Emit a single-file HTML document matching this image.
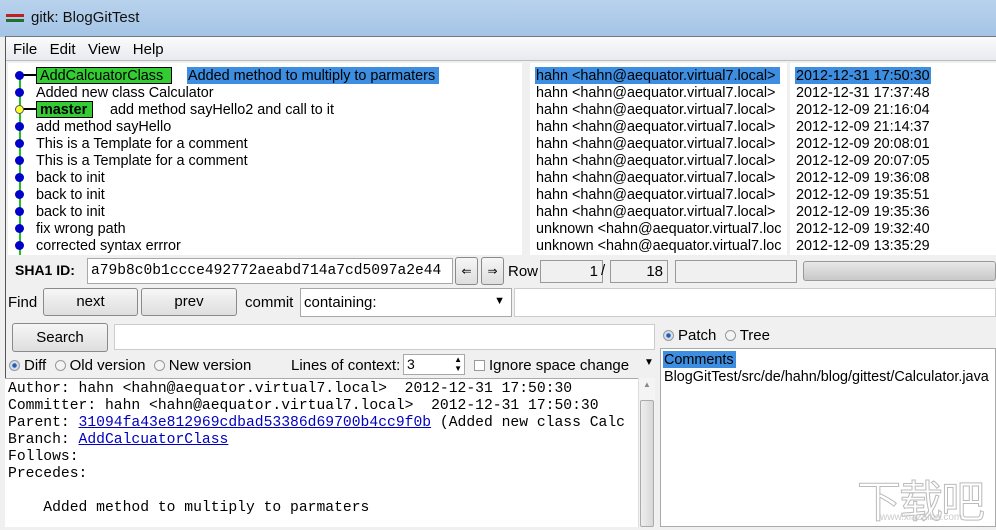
<!DOCTYPE html><html><head><style>
*{margin:0;padding:0;box-sizing:border-box}
body{width:996px;height:527px;overflow:hidden;position:relative;background:#f0f0f0;font-family:"Liberation Sans",sans-serif;font-size:14.4px;color:#000}
.a{position:absolute;white-space:nowrap}
.box{position:absolute;background:#fff;border:1px solid #a8a8a8}
.btn{position:absolute;border:1px solid #8a8a8a;border-radius:3px;background:linear-gradient(#f6f6f6,#dedede);text-align:center;font-size:15px}
.mono{font-family:"Liberation Mono",monospace;font-size:14.7px}
.dot{position:absolute;left:15px;width:9px;height:9px;border-radius:50%;background:#0000c8}
.rad{display:inline-block;width:11px;height:11px;border-radius:50%;border:1px solid #999;background:#f4f4f4;vertical-align:-1px;margin-right:4px}
.rad.on{background:radial-gradient(#2a5da8 30%,#cfe0f0 40%)}
</style></head><body>
<div class="a" style="left:0;top:0;width:996px;height:37px;background:linear-gradient(#b8d2ec,#a4c4e6)"></div>
<div class="a" style="left:6px;top:14px;width:18px;height:3px;background:#c02020"></div>
<div class="a" style="left:6px;top:19px;width:18px;height:3px;background:#207030"></div>
<div class="a" style="left:31px;top:9px;font-size:15px;color:#111">gitk: BlogGitTest</div>
<div class="a" style="left:5px;top:36px;width:991px;height:491px;background:#f0f0f0;border-left:1px solid #555;border-top:1px solid #777"></div>
<div class="a" style="left:6px;top:37px;width:990px;height:24px;background:linear-gradient(#fbfbfb,#e8eaf0);border-bottom:1px solid #bbb"></div>
<div class="a" style="left:13px;top:41px;font-size:15px">File&nbsp;&nbsp;&nbsp;Edit&nbsp;&nbsp;&nbsp;View&nbsp;&nbsp;&nbsp;Help</div>
<div class="a" style="left:8px;top:63px;width:514px;height:192px;background:#fff"></div>
<div class="a" style="left:530px;top:63px;width:257px;height:192px;background:#fff"></div>
<div class="a" style="left:790px;top:63px;width:206px;height:192px;background:#fff"></div>
<div class="a" style="left:19px;top:75px;width:2px;height:180px;background:#22c022"></div>
<div class="a" style="left:20px;top:74px;width:16px;height:2px;background:#000"></div>
<div class="a" style="left:20px;top:108px;width:16px;height:2px;background:#000"></div>
<div class="dot" style="top:71px"></div><div class="dot" style="top:88px"></div>
<div class="dot" style="top:105px;background:#ffff30;border:1px solid #555"></div>
<div class="dot" style="top:122px"></div><div class="dot" style="top:139px"></div><div class="dot" style="top:156px"></div><div class="dot" style="top:173px"></div><div class="dot" style="top:190px"></div><div class="dot" style="top:207px"></div><div class="dot" style="top:224px"></div><div class="dot" style="top:241px"></div>
<div class="a" style="left:36px;top:67px;width:136px;height:17px;background:#33cc33;border:1px solid #000"></div>
<div class="a" style="left:36px;top:101px;width:57px;height:17px;background:#33cc33;border:1px solid #000"></div>
<div class="a" style="left:187px;top:67px;width:252px;height:17px;background:#3d8ee0"></div>
<div class="a" style="left:36px;top:68px;line-height:17px">
&nbsp;AddCalcuatorClass<br>Added new class Calculator<br><b>&nbsp;master</b><br>add method sayHello<br>This is a Template for a comment<br>This is a Template for a comment<br>back to init<br>back to init<br>back to init<br>fix wrong path<br>corrected syntax errror</div>
<div class="a" style="left:188px;top:68px;line-height:17px">Added method to multiply to parmaters</div>
<div class="a" style="left:110px;top:102px;line-height:17px">add method sayHello2 and call to it</div>
<div class="a" style="left:535px;top:67px;width:245px;height:17px;background:#3d8ee0"></div>
<div class="a" style="left:795px;top:67px;width:136px;height:17px;background:#3d8ee0"></div>
<div class="a" style="left:536px;top:68px;line-height:17px">hahn &lt;hahn@aequator.virtual7.local&gt;<br>hahn &lt;hahn@aequator.virtual7.local&gt;<br>hahn &lt;hahn@aequator.virtual7.local&gt;<br>hahn &lt;hahn@aequator.virtual7.local&gt;<br>hahn &lt;hahn@aequator.virtual7.local&gt;<br>hahn &lt;hahn@aequator.virtual7.local&gt;<br>hahn &lt;hahn@aequator.virtual7.local&gt;<br>hahn &lt;hahn@aequator.virtual7.local&gt;<br>hahn &lt;hahn@aequator.virtual7.local&gt;<br>unknown &lt;hahn@aequator.virtual7.loc<br>unknown &lt;hahn@aequator.virtual7.loc</div>
<div class="a" style="left:796px;top:68px;line-height:17px">2012-12-31 17:50:30<br>2012-12-31 17:37:48<br>2012-12-09 21:16:04<br>2012-12-09 21:14:37<br>2012-12-09 20:08:01<br>2012-12-09 20:07:05<br>2012-12-09 19:36:08<br>2012-12-09 19:35:51<br>2012-12-09 19:35:36<br>2012-12-09 19:32:40<br>2012-12-09 13:35:29</div>
<div class="a" style="left:15px;top:262px;font-weight:bold;font-size:14px">SHA1 ID:</div>
<div class="box mono" style="left:87px;top:258px;width:366px;height:26px;padding:4px 3px;font-size:14.6px;overflow:hidden">a79b8c0b1ccce492772aeabd714a7cd5097a2e44</div>
<div class="btn" style="left:455px;top:257px;width:23px;height:28px;font-size:12px;line-height:26px">⇐</div>
<div class="btn" style="left:481px;top:257px;width:23px;height:28px;font-size:12px;line-height:26px">⇒</div>
<div class="a" style="left:508px;top:263px;font-size:15px">Row</div>
<div class="a" style="left:540px;top:260px;width:63px;height:23px;border:1px solid #999;text-align:right;padding:2px 4px;font-size:15px">1</div>
<div class="a" style="left:601px;top:262px;font-size:15px">/</div>
<div class="a" style="left:610px;top:260px;width:58px;height:23px;border:1px solid #999;text-align:right;padding:2px 4px;font-size:15px">18</div>
<div class="a" style="left:675px;top:260px;width:122px;height:23px;border:1px solid #999"></div>
<div class="a" style="left:803px;top:261px;width:193px;height:20px;border:1px solid #999;border-radius:3px;background:linear-gradient(#e8e8e8,#c8c8c8)"></div>
<div class="a" style="left:8px;top:294px;font-size:15px">Find</div>
<div class="btn" style="left:43px;top:288px;width:95px;height:28px;line-height:26px">next</div>
<div class="btn" style="left:141px;top:288px;width:96px;height:28px;line-height:26px">prev</div>
<div class="a" style="left:245px;top:294px;font-size:15px">commit</div>
<div class="box" style="left:300px;top:288px;width:212px;height:29px;padding:5px 3px;font-size:15px">containing:<span style="position:absolute;right:6px;top:6px;font-size:11px">▼</span></div>
<div class="box" style="left:514px;top:288px;width:482px;height:29px;border-color:#ccc"></div>
<div class="btn" style="left:12px;top:323px;width:96px;height:29px;line-height:27px">Search</div>
<div class="box" style="left:114px;top:324px;width:541px;height:26px;border-color:#ccc"></div>
<div class="a" style="left:9px;top:357px;font-size:15px"><span class="rad on"></span>Diff&nbsp;&nbsp;<span class="rad"></span>Old version&nbsp;&nbsp;<span class="rad"></span>New version</div>
<div class="a" style="left:291px;top:357px;font-size:15px">Lines of context:</div>
<div class="box" style="left:403px;top:354px;width:62px;height:21px;padding:1px 3px;font-size:14px">3<span style="position:absolute;right:2px;top:0;font-size:8px;line-height:9px">▲<br>▼</span></div>
<div class="a" style="left:474px;top:357px;font-size:15px"><span style="display:inline-block;width:11px;height:11px;border:1px solid #999;background:#fff;vertical-align:-1px;margin-right:4px"></span>Ignore space change</div>
<div class="a" style="left:644px;top:357px;font-size:10px">▼</div>
<div class="a mono" style="left:5px;top:378px;width:633px;height:149px;background:#fff;border-top:1px solid #aaa;padding:2px 3px;line-height:17px;overflow:hidden;white-space:pre">Author: hahn &lt;hahn@aequator.virtual7.local&gt;  2012-12-31 17:50:30
Committer: hahn &lt;hahn@aequator.virtual7.local&gt;  2012-12-31 17:50:30
Parent: <span style="color:#0000c0;text-decoration:underline">31094fa43e812969cdbad53386d69700b4cc9f0b</span> (Added new class Calc
Branch: <span style="color:#0000c0;text-decoration:underline">AddCalcuatorClass</span>
Follows:
Precedes:

    Added method to multiply to parmaters</div>
<div class="a" style="left:638px;top:378px;width:17px;height:149px;background:#f4f4f4;border-left:1px solid #ddd"></div>
<div class="a" style="left:640px;top:400px;width:14px;height:127px;background:linear-gradient(90deg,#eee,#d8d8d8);border:1px solid #aaa;border-radius:2px"></div>
<div class="a" style="left:643px;top:380px;font-size:8px;color:#888">▲</div>
<div class="a" style="left:663px;top:327px;font-size:15px"><span class="rad on"></span>Patch&nbsp;&nbsp;<span class="rad"></span>Tree</div>
<div class="a" style="left:660px;top:348px;width:336px;height:179px;background:#fff;border:1px solid #aaa"></div>
<div class="a" style="left:663px;top:351px;width:73px;height:17px;background:#3d8ee0"></div>
<div class="a" style="left:664px;top:352px;line-height:17px">Comments<br>BlogGitTest/src/de/hahn/blog/gittest/Calculator.java</div>
<div class="a" style="left:857px;top:466px;font-size:44px;color:#fff;-webkit-text-stroke:1px #bbb;font-family:'Noto Sans CJK SC',sans-serif;letter-spacing:-2px">下载吧</div>
<div class="a" style="left:880px;top:512px;font-size:10px;color:#ccc">www.xiazaiba.com</div>
</body></html>
